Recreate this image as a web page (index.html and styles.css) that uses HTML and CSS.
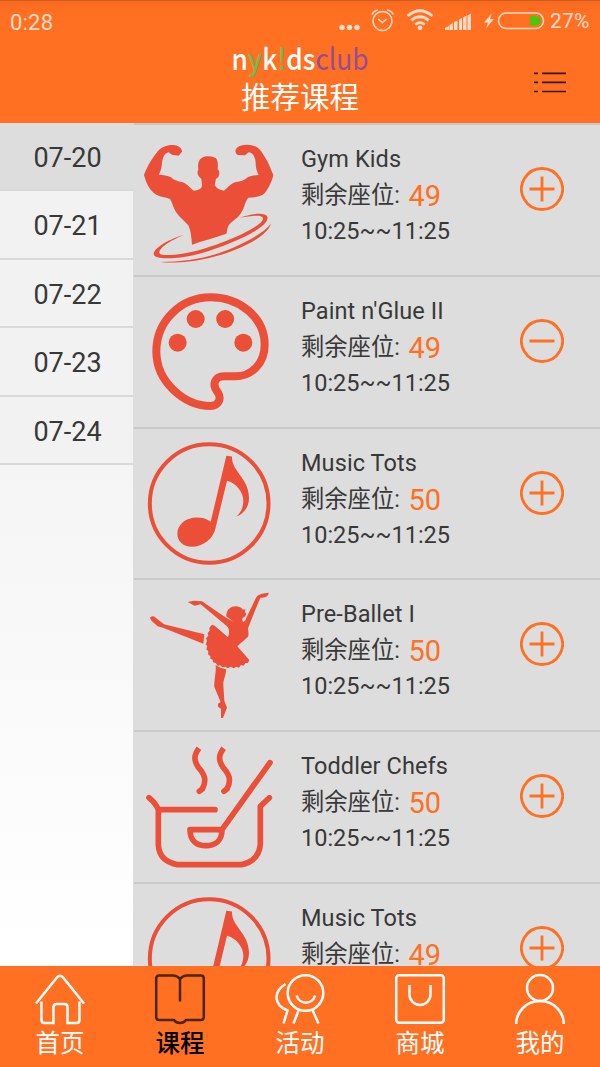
FILE: index.html
```html
<!DOCTYPE html>
<html lang="zh-CN">
<head>
<meta charset="utf-8">
<title>nyk!dsclub 推荐课程</title>
<link rel="stylesheet" href="styles.css">
</head>
<body>
<svg class="defs" width="0" height="0">
  <symbol id="gym" viewBox="0 0 450 450" overflow="visible"><g class="fill" transform="translate(0 15)">
    <path d="M30 135C38 112 55 83 72 63C83 51 103 43 123 46C135 48 145 56 144 65L134 77L114 74L104 67C91 69 86 84 84 99C83 112 81 124 74 134C88 134 102 137 111 142C120 151 132 155 144 156C158 160 166 172 179 182C192 182 204 176 204 165L202 146C193 143 187 127 193 119C191 104 192 90 204 83C216 77 236 77 246 85C253 94 252 108 251 118C260 124 256 144 246 146L242 166C249 176 258 181 270 182C281 173 293 158 306 156C318 154 332 151 339 143C348 137 362 136 374 135C367 122 365 111 365 99C364 82 357 68 344 67L333 76L311 75C303 70 302 60 309 53C321 43 342 43 358 47C374 51 385 67 393 82C404 99 410 117 418 135C415 151 404 175 392 190C380 202 359 201 343 203C333 214 332 231 324 244C317 261 299 270 288 281C278 292 281 302 277 311C245 322 208 332 174 344C172 321 171 302 163 286C153 273 138 264 130 251C118 237 117 222 108 207C98 201 80 202 67 194C49 184 36 160 30 135Z"/>
    <path d="M149 315C110 326 60 352 59 372C60 393 147 386 205 369C284 345 411 293 400 260C393 244 344 253 318 263C348 258 382 252 387 264C391 287 282 335 209 356C148 374 75 382 76 368C77 350 116 329 149 315Z"/>
    <path d="M411 281C396 326 302 366 222 385C165 398 111 400 80 396C140 396 206 387 256 369C318 347 387 312 411 281Z"/>
  </g></symbol>
  <symbol id="paint" viewBox="0 0 450 450" overflow="visible"><g transform="translate(0 9)">
    <path class="line" stroke-width="24" d="M230 52C140 52 67 124 67 214C67 306 151 378 230 378C254 378 263 356 252 338C230 310 246 289 270 289H304C354 289 392 249 392 194C392 113 318 52 230 52Z"/>
    <g class="fill"><circle cx="185" cy="117" r="27"/><circle cx="273.500" cy="117" r="27"/><circle cx="131" cy="188" r="27"/><circle cx="328" cy="188" r="27"/></g>
  </g></symbol>
  <symbol id="music" viewBox="0 0 450 450" overflow="visible"><g transform="translate(0 3.500)">
    <circle class="line" stroke-width="12" cx="225.500" cy="220" r="178"/>
    <path class="fill" d="M277 77L294 79C292 125 345 143 345 204C345 230 329 252 307 259C321 247 328 231 328 211C328 187 305 157 279 152L245 292C239 325 208 350 173 350C148 350 130 334 130 311C130 282 157 262 188 262C206 262 220 266 230 275Z"/>
  </g></symbol>
  <symbol id="ballet" viewBox="0 0 450 450" overflow="visible"><g class="fill">
    <path d="M48 115C50 108 59 107 65 113L90 133L211 163L208 191L87 143L71 139L54 124Z"/>
    <path d="M161 66L179 62L204 64L274 112L298 125L277 109C276 89 291 78 307 79C318 80 324 84 326 89L334 88L333 96L337 102L331 112C325 111 323 119 327 126L333 122L366 53C371 44 381 40 404 38C403 48 397 53 379 53L345 137C338 148 347 157 342 170L310 199L346 240L342 249L334 249L329 257L321 255L315 263L307 260L299 265L290 260L282 265L273 260L266 262L258 256L251 257L245 249L237 247L236 239L229 236L229 228L222 223L223 214L217 208L220 199L215 193L219 183L216 175L223 167L221 159L227 152L226 143L234 134L242 137L282 172C288 157 285 143 278 138L200 73L182 77Z"/>
    <path d="M245 255L259 263L276 268C277 286 267 299 268 316L271 362L279 383L267 414H261V386L252 380V371L260 366L241 321C240 299 247 279 245 255Z"/>
  </g></symbol>
  <symbol id="chef" viewBox="0 0 450 450" overflow="visible"><g class="line" stroke-width="17" transform="translate(0 -6)">
    <path stroke-linecap="round" stroke-linejoin="round" d="M45 203Q66 221 73 239V344Q75 393 130 404H322Q374 393 379 344V229L406 203M73 239H243M408 98L264 299H168C168 334 190 347 216 347C244 347 264 331 264 299"/>
    <path d="M195 55C179 76 179 91 193 112C212 133 219 150 205 177"/><path d="M269 55C253 76 253 91 267 112C286 133 293 150 279 177"/>
    <path stroke-linecap="round" d="M205 177L196 184M279 177L270 184"/>
  </g></symbol>
  <symbol id="plus" viewBox="0 0 44 44"><path class="action" d="M22 1.500a20.500 20.500 0 1 0 .01 0ZM9.500 22h25M22 9.500v25"/></symbol>
  <symbol id="minus" viewBox="0 0 44 44"><path class="action" d="M22 1.500a20.500 20.500 0 1 0 .01 0ZM9.500 22h25"/></symbol>
</svg>
<div class="app">
  <header class="header">
    <div class="status">
      <span class="clock">0:28</span>
      <svg class="status-icons" viewBox="0 0 258 30">
        <g fill="#ffdcc8"><circle cx="2" cy="20.500" r="2.700"/><circle cx="9.500" cy="20.500" r="2.700"/><circle cx="17" cy="20.500" r="2.700"/>
        <circle cx="80" cy="20.800" r="2.400"/>
        <path d="M105 23v-2l4-2v4zM109.500 23v-5l3.500-2v7zM114 23v-8l3.500-1.500v9.500zM119 23v-10.500l3-1.500v12zM123 23v-12.500l3.500-2v14.500zM127.500 23v-14.500l3.500-2v16.500zM152 6l-8 9.500h4l-2 6 8-9.500h-4z"/></g>
        <g fill="none" stroke="#ffdcc8" stroke-width="1.500"><circle cx="42.500" cy="14" r="9.500"/><path d="M38 12l4.500 3.500 4-3.500M32 7.500q2-4 6-4.500M47 3q4 .5 6.500 4.500"/>
        <path stroke-width="2.800" d="M67.500 9q12.500-10.500 25 0M71.300 13.300q8.700-7 17.400 0M75.300 17.500q4.700-3.700 9.400 0"/>
        <rect x="158.500" y="6" width="45" height="15.500" rx="7.700"/></g>
        <path fill="#4ec50a" d="M190 9h6q5 .5 5 4.800t-5 4.800h-6z"/>
      </svg>
      <span class="percent">27%</span>
    </div>
    <div class="brand">
      <div class="logo">n<span class="green">y</span>k<span class="green">!</span>ds<span class="purple">club</span></div>
      <h1>推荐课程</h1>
    </div>
    <svg class="menu" viewBox="0 0 34 24"><path d="M1 3.300h4M9 3.300h24M1 12.300h4M9 12.300h24M1 21.500h4M9 21.500h24"/></svg>
  </header>
  <main class="content">
    <aside class="dates">
      <div class="date selected">07-20</div><div class="date">07-21</div><div class="date">07-22</div><div class="date">07-23</div><div class="date">07-24</div>
    </aside>
    <section class="courses">
      <article class="course"><svg class="pic"><use href="#gym"/></svg><div class="info"><h2>Gym Kids</h2><p class="seats"><span>剩余座位:</span><b>49</b></p><p class="time">10:25~~11:25</p></div><svg class="toggle"><use href="#plus"/></svg></article>
      <article class="course"><svg class="pic"><use href="#paint"/></svg><div class="info"><h2>Paint n'Glue II</h2><p class="seats"><span>剩余座位:</span><b>49</b></p><p class="time">10:25~~11:25</p></div><svg class="toggle"><use href="#minus"/></svg></article>
      <article class="course"><svg class="pic"><use href="#music"/></svg><div class="info"><h2>Music Tots</h2><p class="seats"><span>剩余座位:</span><b>50</b></p><p class="time">10:25~~11:25</p></div><svg class="toggle"><use href="#plus"/></svg></article>
      <article class="course"><svg class="pic"><use href="#ballet"/></svg><div class="info"><h2>Pre-Ballet I</h2><p class="seats"><span>剩余座位:</span><b>50</b></p><p class="time">10:25~~11:25</p></div><svg class="toggle"><use href="#plus"/></svg></article>
      <article class="course"><svg class="pic"><use href="#chef"/></svg><div class="info"><h2>Toddler Chefs</h2><p class="seats"><span>剩余座位:</span><b>50</b></p><p class="time">10:25~~11:25</p></div><svg class="toggle"><use href="#plus"/></svg></article>
      <article class="course"><svg class="pic"><use href="#music"/></svg><div class="info"><h2>Music Tots</h2><p class="seats"><span>剩余座位:</span><b>49</b></p></div><svg class="toggle"><use href="#plus"/></svg></article>
    </section>
  </main>
  <nav class="tabs">
    <a class="tab"><svg viewBox="0 0 50 50"><path d="M1 29.500L21.500 4Q25 -.5 28.500 4L49 29.500M6.500 27.500V46Q6.500 49 9.500 49H18.500V33Q18.500 30 21.500 30H29.500Q32.500 30 32.500 33V49H41.500Q44.500 49 44.500 46V27.500"/></svg><span>首页</span></a>
    <a class="tab active"><svg viewBox="0 0 50 50"><path d="M25 27.500V5Q22 1.500 18 1.500H4Q1.200 1.500 1.200 4.500V43Q1.200 46 4 46H19Q21 49 25 49T31 46H46Q48.800 46 48.800 43V4.500Q48.800 1.500 46 1.500H32Q28 1.500 25 5"/></svg><span>课程</span></a>
    <a class="tab"><svg viewBox="0 0 50 50"><circle cx="30.500" cy="19" r="17.800"/><path d="M21.700 21.500C24 31 38 31 40 21.500M10.500 10C-2 18-1.500 31 12.500 36.500L8.500 49.500M23.700 36L18.500 49.500M37.500 36L43.500 49.500"/></svg><span>活动</span></a>
    <a class="tab"><svg viewBox="0 0 50 50"><rect x="1.200" y="1.200" width="47.600" height="47.600" rx="3"/><path d="M14.500 11V20.500A10.500 10.500 0 0 0 35.500 20.500V11"/></svg><span>商城</span></a>
    <a class="tab"><svg viewBox="0 0 50 50"><circle cx="25" cy="14" r="13"/><path d="M1.200 50A23.800 23 0 0 1 48.800 50"/></svg><span>我的</span></a>
  </nav>
</div>
</body>
</html>
```
FILE: styles.css
```css
* { box-sizing: border-box; }
body { margin: 0; font-family: Roboto, "Noto Sans CJK SC", sans-serif; color: #383838; }
h1, h2, p { margin: 0; font-weight: 400; }
svg { display: block; flex: none; overflow: visible; }
.defs { position: absolute; }
.app { width: 600px; height: 1067px; display: flex; flex-direction: column; overflow: hidden; background: #ddd; }

.header { position: relative; flex: 0 0 123px; background: linear-gradient(#bf541a 0, #f46b1f 1.500px, #fa6c20 4px, #ff7022 14px); }
.status { display: flex; height: 44px; color: #ffdcc8; }
.clock { width: 337px; padding-left: 10px; font-size: 22px; line-height: 45px; letter-spacing: .2px; }
.status-icons { width: 258px; height: 30px; margin: 7px -45px 0 3px; }
.percent { font-size: 21px; line-height: 43px; margin-left: -3px; letter-spacing: .2px; }
.brand { display: flex; flex-direction: column; align-items: center; color: #fff; }
.logo { font-family: "Noto Sans CJK SC", sans-serif; font-size: 29.500px; line-height: 27px; height: 34px; transform: scaleX(.89); white-space: nowrap; font-weight: 500; }
.green { color: #76b852; }
.purple { color: #924f96; font-weight: 400; }
.brand h1 { font-size: 29.500px; line-height: 40px; }
.menu { position: absolute; left: 533px; top: 70px; width: 34px; height: 24px; }
.menu path { stroke: #30180a; stroke-width: 1.700; }

.content { flex: 1; display: flex; min-height: 0; }
.dates { width: 133px; flex: none; background: linear-gradient(#eee, #fff); }
.date { height: 68.400px; border-bottom: 2px solid #d9d9d9; background: #f2f2f2; font-size: 27px; line-height: 70px; text-align: center; padding-left: 2px; }
.date.selected { background: #ddd; }
.courses { flex: 1; padding-left: 1px; overflow: hidden; }
.course { display: flex; height: 151.800px; border-top: 2px solid #c9c9c9; }
.fill { fill: #eb4f38; }
.line { fill: none; stroke: #eb4f38; }
.pic { width: 150px; height: 150px; }
.info { width: 236px; padding: 16px 0 0 17px; }
.info h2 { font-size: 23.500px; line-height: 36px; letter-spacing: .1px; }
.seats { display: flex; height: 36px; line-height: 36px; font-size: 23.300px; }
.seats span { width: 107.500px; }
.seats b { font-weight: 400; font-size: 29px; color: #ff7022; line-height: 38px; }
.time { font-size: 23.500px; line-height: 37px; letter-spacing: 0; }
.toggle { width: 44px; height: 44px; margin-top: 42px; }
.action { fill: none; stroke: #ff7022; stroke-width: 2.800; }

.tabs { flex: 0 0 101px; display: flex; background: #ff7022; }
.tab { flex: 1; display: flex; flex-direction: column; align-items: center; padding-top: 8px; color: #fff; }
.tab svg { width: 50px; height: 50px; fill: none; stroke: #fff; stroke-width: 2.500; }
.tab span { font-size: 24.500px; line-height: 36px; font-family: "Noto Sans CJK SC", sans-serif; }
.tab.active { color: #000; font-weight: 500; }
.tab.active svg { stroke: #4b2500; }
```
